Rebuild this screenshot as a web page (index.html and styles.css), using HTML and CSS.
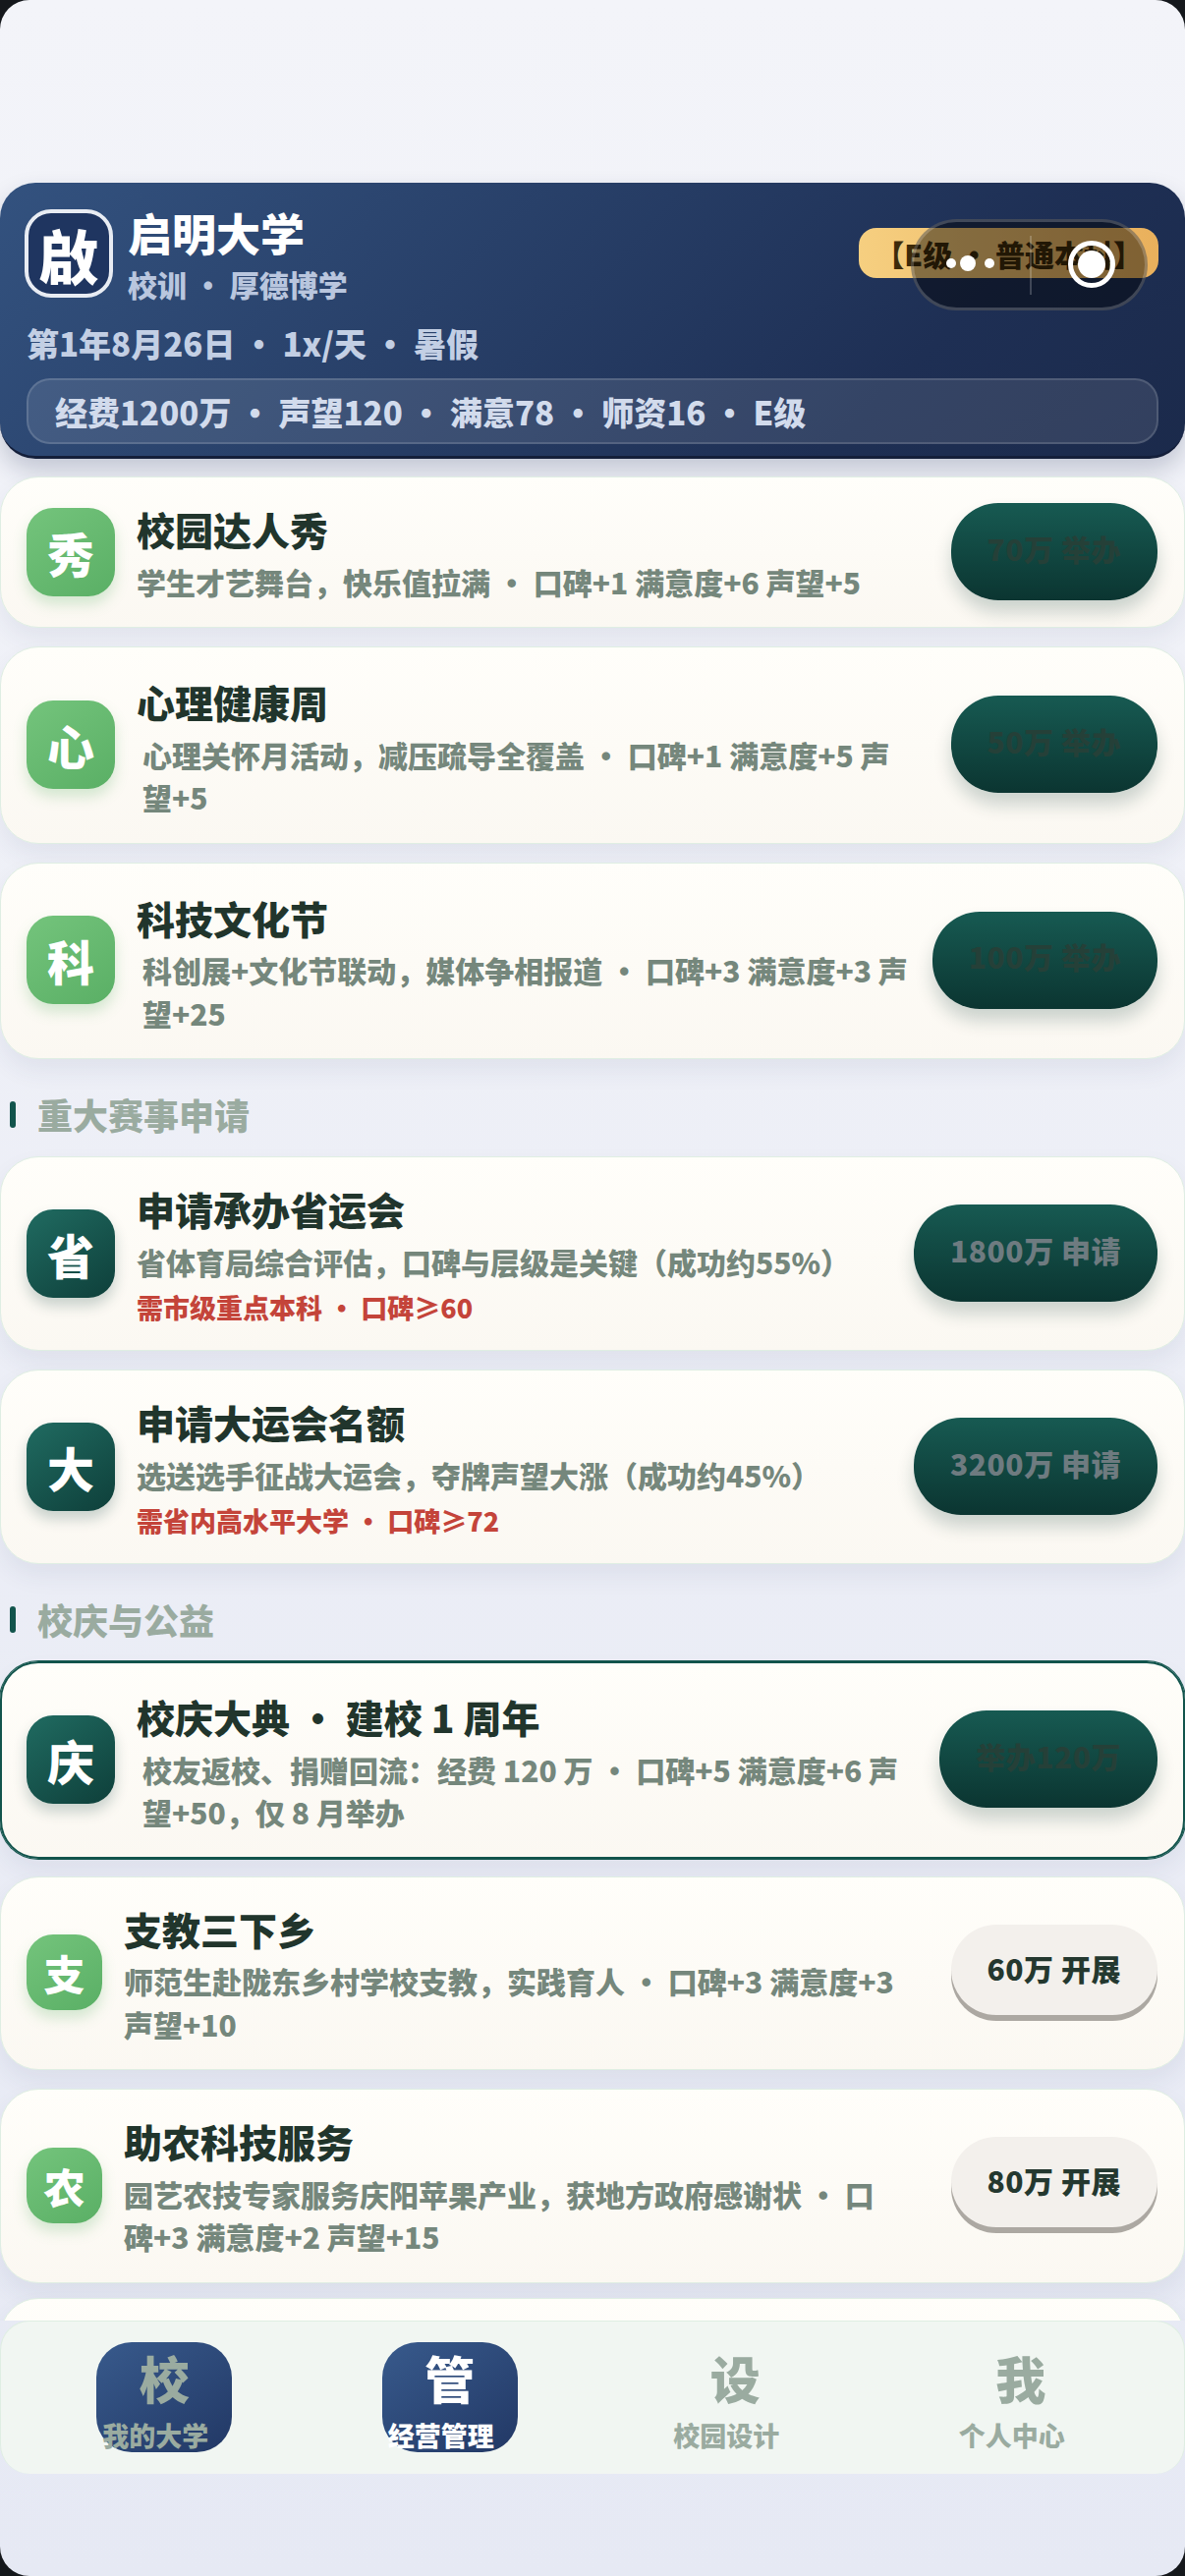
FILE: index.html
```html
<!DOCTYPE html>
<html lang="zh-CN">
<head>
    <meta charset="UTF-8">
    <meta name="viewport" content="width=device-width, initial-scale=1.0">
    <title>经营管理</title>
    <link rel="stylesheet" href="styles.css">
</head>
<body>
    <div class="screen">
        <!-- 顶部学校信息 -->
        <header class="campus">
            <div class="campus-top">
                <div class="logo">啟</div>
                <div class="campus-name">
                    <h1>启明大学</h1>
                    <p>校训 · 厚德博学</p>
                </div>
                <div class="grade">【E级 · 普通本科】</div>
            </div>
            <div class="date">第1年8月26日 · 1x/天 · 暑假</div>
            <div class="stats">经费1200万 · 声望120 · 满意78 · 师资16 · E级</div>
        </header>

        <!-- 小程序胶囊 -->
        <div class="capsule">
            <span class="dot"></span>
            <span class="dot dot-big"></span>
            <span class="dot"></span>
            <span class="capsule-line"></span>
            <span class="target"></span>
        </div>

        <main class="list">
            <div class="card">
                <div class="icon">秀</div>
                <div class="info">
                    <h3>校园达人秀</h3>
                    <p class="desc">学生才艺舞台，快乐值拉满 · 口碑+1 满意度+6 声望+5</p>
                </div>
                <div class="btn btn-dark">70万 举办</div>
            </div>
            <div class="card">
                <div class="icon">心</div>
                <div class="info info-in">
                    <h3>心理健康周</h3>
                    <p class="desc">心理关怀月活动，减压疏导全覆盖 · 口碑+1 满意度+5 声望+5</p>
                </div>
                <div class="btn btn-dark">50万 举办</div>
            </div>
            <div class="card">
                <div class="icon">科</div>
                <div class="info info-in">
                    <h3>科技文化节</h3>
                    <p class="desc">科创展+文化节联动，媒体争相报道 · 口碑+3 满意度+3 声望+25</p>
                </div>
                <div class="btn btn-dark">100万 举办</div>
            </div>

            <div class="section">重大赛事申请</div>
            <div class="card">
                <div class="icon icon-dark">省</div>
                <div class="info">
                    <h3>申请承办省运会</h3>
                    <p class="desc">省体育局综合评估，口碑与层级是关键（成功约55%）</p>
                    <p class="need">需市级重点本科 · 口碑≥60</p>
                </div>
                <div class="btn btn-dark btn-off">1800万 申请</div>
            </div>
            <div class="card">
                <div class="icon icon-dark">大</div>
                <div class="info">
                    <h3>申请大运会名额</h3>
                    <p class="desc">选送选手征战大运会，夺牌声望大涨（成功约45%）</p>
                    <p class="need">需省内高水平大学 · 口碑≥72</p>
                </div>
                <div class="btn btn-dark btn-off">3200万 申请</div>
            </div>

            <div class="section">校庆与公益</div>
            <div class="card card-on">
                <div class="icon icon-dark">庆</div>
                <div class="info info-in">
                    <h3>校庆大典 · 建校 1 周年</h3>
                    <p class="desc">校友返校、捐赠回流：经费 120 万 · 口碑+5 满意度+6 声望+50，仅 8 月举办</p>
                </div>
                <div class="btn btn-dark">举办120万</div>
            </div>
            <div class="card">
                <div class="icon icon-small">支</div>
                <div class="info">
                    <h3>支教三下乡</h3>
                    <p class="desc">师范生赴陇东乡村学校支教，实践育人 · 口碑+3 满意度+3 声望+10</p>
                </div>
                <div class="btn btn-light">60万 开展</div>
            </div>
            <div class="card card-tight">
                <div class="icon icon-small">农</div>
                <div class="info">
                    <h3>助农科技服务</h3>
                    <p class="desc">园艺农技专家服务庆阳苹果产业，获地方政府感谢状 · 口碑+3 满意度+2 声望+15</p>
                </div>
                <div class="btn btn-light">80万 开展</div>
            </div>
            <div class="card"></div>
        </main>

        <nav class="tabs">
            <div class="tab tab-on">
                <span class="tab-icon">校</span>
                <span class="tab-name">我的大学</span>
            </div>
            <div class="tab tab-on tab-now">
                <span class="tab-icon">管</span>
                <span class="tab-name">经营管理</span>
            </div>
            <div class="tab">
                <span class="tab-icon">设</span>
                <span class="tab-name">校园设计</span>
            </div>
            <div class="tab">
                <span class="tab-icon">我</span>
                <span class="tab-name">个人中心</span>
            </div>
        </nav>
    </div>
</body>
</html>
```

FILE: styles.css
```css
* {
    box-sizing: border-box;
}

html, body {
    margin: 0;
    padding: 0;
    background-color: #15181c;
}

.screen {
    position: relative;
    width: 1206px;
    height: 2622px;
    display: flex;
    flex-direction: column;
    padding: 186px 0 104px;
    overflow: hidden;
    border-radius: 30px;
    background: linear-gradient(180deg, #f3f4f9, #e6e9f4);
    font-family: "Noto Sans CJK SC", "Noto Sans", sans-serif;
    font-weight: 900;
}

h1, h3, p {
    margin: 0;
    font-weight: 900;
}

/* 顶部学校信息 */
.campus {
    flex-shrink: 0;
    height: 281px;
    padding: 27px 27px 0 25px;
    border-radius: 36px;
    border-bottom: 3px solid #141f3a;
    background: linear-gradient(135deg, #33527f, #1e2f54 75%, #1b2a4b);
    box-shadow: 0 12px 24px rgba(30, 45, 80, 0.22);
    color: #fff;
}

.campus-top {
    display: flex;
    align-items: flex-start;
}

.logo {
    flex-shrink: 0;
    width: 90px;
    height: 90px;
    display: flex;
    align-items: center;
    justify-content: center;
    border: 4px solid #e8ecf3;
    border-radius: 27px;
    background-color: #1f3560;
    font-size: 60px;
}

.campus-name {
    flex: 1;
    margin-left: 15px;
}

.campus-name h1 {
    margin: -4px 0 4px;
    font-size: 45px;
    line-height: 56px;
}

.campus-name p {
    font-size: 30px;
    line-height: 40px;
    color: #b9c6de;
}

.grade {
    margin-top: 19px;
    height: 51px;
    padding: 0 16px;
    display: flex;
    align-items: center;
    border-radius: 18px;
    background: linear-gradient(90deg, #f6cf80, #e9b05c);
    font-size: 30px;
    color: #3d2a0a;
}

.date {
    margin: 17px 0 0 2px;
    font-size: 33px;
    line-height: 46px;
    color: #c3cfe4;
}

.stats {
    margin: 13px 0 0 2px;
    height: 67px;
    padding-left: 27px;
    display: flex;
    align-items: center;
    border: 2px solid rgba(255, 255, 255, 0.14);
    border-radius: 24px;
    background-color: rgba(255, 255, 255, 0.1);
    font-size: 33px;
    color: #d2dbec;
}

/* 胶囊盖在页面上面 */
.capsule {
    position: absolute;
    left: 927px;
    top: 223px;
    width: 241px;
    height: 93px;
    border: 3px solid rgba(255, 255, 255, 0.2);
    border-radius: 47px;
    background-color: rgba(0, 0, 0, 0.45);
}

.dot {
    position: absolute;
    left: 33px;
    top: 37px;
    width: 10px;
    height: 10px;
    border-radius: 50%;
    background-color: #fff;
}

.dot-big {
    left: 47px;
    top: 34px;
    width: 16px;
    height: 16px;
}

.dot + .dot-big + .dot {
    left: 72px;
}

.capsule-line {
    position: absolute;
    left: 118px;
    top: 14px;
    width: 2px;
    height: 60px;
    background-color: rgba(255, 255, 255, 0.2);
}

.target {
    position: absolute;
    left: 157px;
    top: 19px;
    width: 48px;
    height: 48px;
    border: 5px solid #fff;
    border-radius: 50%;
}

.target::after {
    content: "";
    position: absolute;
    left: 5px;
    top: 5px;
    width: 28px;
    height: 28px;
    border-radius: 50%;
    background-color: #fff;
}

/* 列表 */
.list {
    flex: 1;
    min-height: 0;
    overflow: hidden;
    padding-top: 18px;
}

.card {
    min-height: 153px;
    margin-bottom: 19px;
    padding: 23px 29px 24px;
    display: flex;
    align-items: center;
    border: 1px solid #dfeee3;
    border-radius: 39px;
    background: linear-gradient(180deg, #fffefa, #fbf8f2);
    box-shadow: 0 12px 24px rgba(40, 60, 100, 0.07);
}

.card-on {
    margin-bottom: 18px;
    padding: 22px 28px 23px;
    border: 2px solid #12544c;
    box-shadow: 0 0 0 1px #12544c, 0 12px 24px rgba(40, 60, 100, 0.07);
}

.card-tight {
    margin-bottom: 15px;
}

.icon {
    flex-shrink: 0;
    width: 90px;
    height: 90px;
    margin-left: -3px;
    display: flex;
    align-items: center;
    justify-content: center;
    border-radius: 27px;
    background: linear-gradient(145deg, #74c47c, #5aaf65);
    box-shadow: 0 8px 14px rgba(90, 175, 101, 0.25);
    color: #fff;
    font-size: 48px;
}

.icon-dark {
    background: linear-gradient(145deg, #206b61, #0e3f3a);
    box-shadow: 0 8px 14px rgba(14, 63, 58, 0.22);
}

.icon-small {
    width: 77px;
    height: 77px;
    font-size: 42px;
}

.info {
    flex: 1;
    min-width: 0;
    margin: 0 22px;
}

.info h3 {
    margin-bottom: 3px;
    font-size: 39px;
    line-height: 58.5px;
    color: #21352c;
}

.info-in {
    padding-top: 3px;
}

.desc {
    max-width: 785px;
    font-size: 30px;
    line-height: 43.5px;
    color: #75877c;
}

.info-in .desc {
    margin-left: 6px;
}

.need {
    margin-top: 5px;
    font-size: 27px;
    line-height: 39px;
    color: #c4443a;
}

.btn {
    flex-shrink: 0;
    height: 99px;
    margin-right: -2px;
    padding: 0 37px 8px;
    display: flex;
    align-items: center;
    border-radius: 48px;
    font-size: 30px;
    letter-spacing: 0.5px;
    white-space: nowrap;
}

.btn-dark {
    background: linear-gradient(180deg, #175a52, #0b3531);
    box-shadow: 0 12px 18px rgba(12, 56, 52, 0.2);
    color: #254038;
}

.btn-off {
    color: #6e7b80;
}

.btn-light {
    height: 92px;
    margin-bottom: 6px;
    padding-bottom: 4px;
    background-color: #f3f0ec;
    box-shadow: 0 6px 0 #aca8a2;
    color: #24382f;
}

.section {
    height: 54px;
    margin: 29px 0 16px;
    padding-left: 10px;
    display: flex;
    align-items: center;
    font-size: 36px;
    color: #9aaba0;
}

.section::before {
    content: "";
    width: 6px;
    height: 27px;
    margin-right: 22px;
    border-radius: 3px;
    background-color: #12544c;
}

/* 底部导航 */
.tabs {
    flex-shrink: 0;
    height: 156px;
    padding: 21px 21px 0;
    display: grid;
    grid-template-columns: repeat(4, 1fr);
    align-items: start;
    border: 1px solid #dfeee3;
    border-bottom: none;
    border-radius: 30px;
    background-color: #f1f6f2;
}

.tab {
    width: 138px;
    height: 112px;
    margin: 0 auto;
    display: flex;
    flex-direction: column;
    align-items: center;
    color: #9aaba0;
}

.tab-on {
    border-radius: 36px;
    background: linear-gradient(145deg, #385a8c, #223865);
}

.tab-now {
    color: #fff;
}

.tab-icon {
    font-size: 51px;
    line-height: 70px;
    margin-top: 1px;
}

.tab-name {
    font-size: 27px;
    line-height: 38px;
    margin-top: 5px;
    margin-right: 18px;
    white-space: nowrap;
}
```
